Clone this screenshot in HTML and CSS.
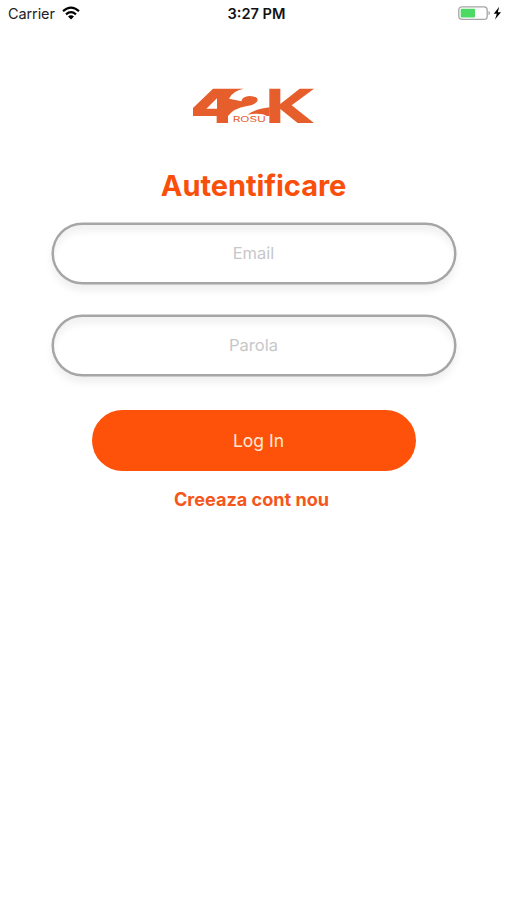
FILE: index.html
```html
<!DOCTYPE html>
<html lang="ro">
<head>
<meta charset="utf-8">
<meta name="viewport" content="width=device-width">
<title>Autentificare</title>
<link rel="stylesheet" href="styles.css">
</head>
<body>
<header class="status">
  <div class="carrier"><span>Carrier</span>
    <svg class="wifi" width="18" height="14" viewBox="0 0 18 14"><g fill="none" stroke="#000" stroke-width="2.2"><path d="M1 5.2Q9-1.8 17 5.2"/><path d="M4 8.3Q9 4 14 8.3"/></g><path d="M6 10.4Q9 8 12 10.4L9 13.4Z"/></svg>
  </div>
  <time class="clock">3:27 PM</time>
  <div class="power">
    <svg width="44" height="16" viewBox="0 0 44 16"><rect x=".8" y="1.8" width="28.4" height="12.6" rx="3.2" fill="#fff" stroke="#a5a5a5" stroke-width="1.3"/><rect x="2.7" y="3.7" width="14.3" height="8.8" rx="1" fill="#4cd964"/><path d="M30.5 6q1.6.6 1.6 2.1t-1.6 2.1Z" fill="#a5a5a5"/><path d="M41.2 1.8 35.8 8.8H38.8L37 14.5 43 7.3H39.8Z"/></svg>
  </div>
</header>
<main class="login">
  <svg class="logo" width="140" height="50" viewBox="0 0 420 150" role="img" aria-label="42K Rosu">
    <g fill="#e55e2b">
      <path fill-rule="evenodd" d="M84 26H176Q142 33 132 56Q152 59 169 64Q172 49 194 48Q217 49 218 60Q216 73 186 78Q145 85 129 108V129H95V108H24V84ZM96 55L64 86H96Z"/>
      <path d="M188 104Q207 88 254 82V108H245Q229 97 188 104Z"/>
      <path d="M253 26H286V72L344 26H387L320 76L387 129H338L286 87V129H253Z"/>
    </g>
    <text class="logo-name" x="143" y="127" textLength="100" lengthAdjust="spacingAndGlyphs">ROSU</text>
  </svg>
  <h1 class="title">Autentificare</h1>
  <form class="form">
    <input class="field" type="email" placeholder="Email" aria-label="Email">
    <input class="field" type="password" placeholder="Parola" aria-label="Parola">
    <button class="submit" type="button">Log In</button>
  </form>
  <a class="signup">Creeaza cont nou</a>
</main>
</body>
</html>
```
FILE: styles.css
```css
* { box-sizing: border-box; }
body {
  margin: 0;
  min-height: 900px;
  background: #fff;
  color: #222;
  font-family: Inter, "Liberation Sans", sans-serif;
}
.status {
  display: grid;
  grid-template-columns: 1fr auto 1fr;
  align-items: center;
  height: 28px;
  padding: 0 5px 2px 8px;
  font-size: 14.5px;
}
.carrier { display: flex; align-items: center; gap: 7px; letter-spacing: -.1px; }
.wifi { margin-top: -1px; }
.clock { padding: 2px 0 0 3px; font-weight: 600; font-size: 14.6px; color: #111; }
.power { display: flex; justify-content: flex-end; margin-top: -1px; }
.login { display: flex; flex-direction: column; align-items: center; padding-top: 52px; }
.logo { display: block; margin-left: 3px; }
.logo-name { font: 400 23px Inter, sans-serif; fill: #e55e2b; }
.title {
  margin: 35px 0 0;
  height: 40px;
  font-size: 29px;
  font-weight: 700;
  line-height: 41px;
  letter-spacing: -.05px;
  color: #fa4f0a;
}
.form { display: flex; flex-direction: column; align-items: center; margin-top: 18px; }
.field {
  width: 404px;
  height: 61px;
  margin: 0 0 31px;
  padding: 0 24px 1px;
  border: 2px solid #a6a6a6;
  border-radius: 31px;
  outline: 0;
  background: #fff;
  box-shadow: 0 0 0 .5px #a6a6a6, 0 6px 8px rgba(0, 0, 0, .07), inset 0 8px 6px -1px rgba(0, 0, 0, .05);
  font: 400 16.5px Inter, sans-serif;
  text-align: center;
}
.field::placeholder { color: #c7c7c9; opacity: 1; }
.submit {
  width: 324px;
  height: 61px;
  margin-top: 3px;
  padding: 0 0 0 10px;
  border: 0;
  border-radius: 31px;
  background: #fe520a;
  color: #ffe9d5;
  font: 400 17.5px Inter, sans-serif;
}
.signup {
  margin: 16px 4px 0 0;
  color: #f4561b;
  font-size: 18.1px;
  font-weight: 700;
  line-height: 24px;
}
```
